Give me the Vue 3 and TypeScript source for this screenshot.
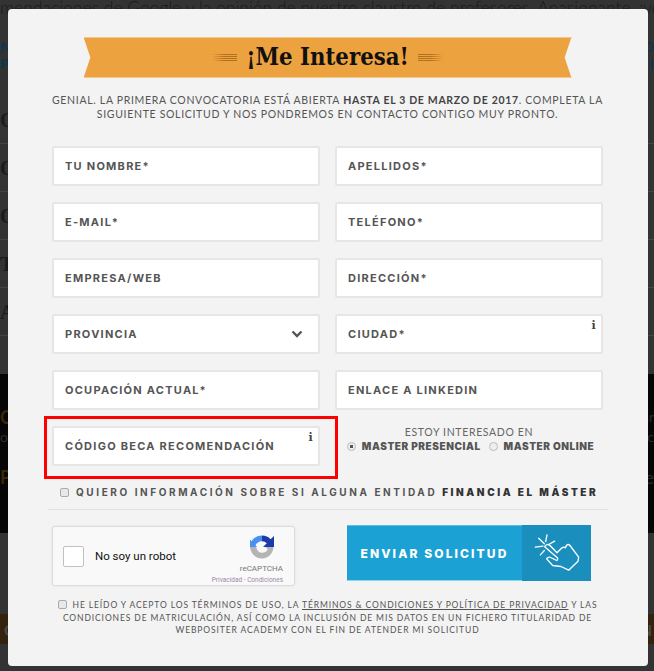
<script setup lang="ts">
interface Field { label: string; info?: boolean; select?: boolean }
const fields: Field[] = [
  { label: 'TU NOMBRE*' }, { label: 'APELLIDOS*' },
  { label: 'E-MAIL*' }, { label: 'TELÉFONO*' },
  { label: 'EMPRESA/WEB' }, { label: 'DIRECCIÓN*' },
  { label: 'PROVINCIA', select: true }, { label: 'CIUDAD*', info: true },
  { label: 'OCUPACIÓN ACTUAL*' }, { label: 'ENLACE A LINKEDIN' },
]
const bgRows: string[] = ['C', 'OI', 'O', 'T', 'A']
</script>

<template>
  <div class="page">
    <div class="backdrop">
      <p class="bg-line">mendaciones de Google y la opinión de nuestro claustro de profesores. Apasionante, ¡ven</p>
      <div class="bg-teal"><span>M</span><span>D</span></div>
      <div class="bg-teal"><span>P</span><span>I</span></div>
      <div class="bg-rows">
        <div v-for="r in bgRows" :key="r" class="bg-row">{{ r }}</div>
      </div>
      <div class="bg-band">
        <div class="bg-a"><span>C</span><span>ar</span></div>
        <div class="bg-b"><span>o a</span><span>c</span></div>
        <div class="bg-c"><span>PP</span><span>e</span></div>
      </div>
      <div class="bg-orange"><span>C</span><span>N</span></div>
    </div>
    <section class="modal">
      <div class="ribbon">
        <span class="rule left"></span>
        <h1>¡Me Interesa!</h1>
        <span class="rule"></span>
      </div>
      <p class="intro">
        GENIAL. LA PRIMERA CONVOCATORIA ESTÁ ABIERTA <b>HASTA EL 3 DE MARZO DE 2017</b>. COMPLETA LA<br />SIGUIENTE SOLICITUD Y NOS PONDREMOS EN CONTACTO CONTIGO MUY PRONTO.
      </p>
      <div class="grid">
        <div v-for="f in fields" :key="f.label" class="field">
          <span>{{ f.label }}</span>
          <i v-if="f.info" class="info">i</i>
          <svg v-if="f.select" class="chev" viewBox="0 0 12 8" width="12" height="8"><path d="M1.500 1.500 6 6l4.500-4.500" fill="none" stroke="#555" stroke-width="2.400" /></svg>
        </div>
        <div class="code-wrap">
          <div class="field">
            <span>CÓDIGO BECA RECOMENDACIÓN</span>
            <i class="info">i</i>
          </div>
        </div>
        <div class="interest">
          <div class="interest-title">ESTOY INTERESADO EN</div>
          <div class="radios">
            <span class="radio on"></span><b>MASTER PRESENCIAL</b>
            <span class="radio second"></span><b>MASTER ONLINE</b>
          </div>
        </div>
      </div>
      <div class="finance">
        <span class="check"></span>
        <span>QUIERO INFORMACIÓN SOBRE SI ALGUNA ENTIDAD <b>FINANCIA EL MÁSTER</b></span>
      </div>
      <div class="actions">
        <div class="captcha">
          <span class="captcha-box"></span>
          <span class="captcha-text">No soy un robot</span>
          <div class="captcha-logo">
            <svg viewBox="0 0 24 24" width="24" height="24">
              <path d="M12 .5C7.500.5 3.700 2.800 1.600 6.200L0 4.500V12h7l-1.500-1.700C6.300 8 8.900 6.300 12 6.300z" fill="#4a90f0" />
              <path d="M12 .5c3.500 0 6.500 1.300 8.600 3.700L24 1v11H13l3.800-3.700C15.500 7 13.900 6.300 12 6.300z" fill="#1c3aa9" />
              <path d="M0 12h6.300c.2 3.200 2.700 5.800 5.700 5.800 3 0 5-1.500 5.700-3.500l-2-2.300H23.500C23 18.500 18.500 23.500 12 23.500S.5 18.500 0 12z" fill="#b4b4b4" />
            </svg>
            <div class="re">reCAPTCHA</div>
            <div class="priv">Privacidad - Condiciones</div>
          </div>
        </div>
        <div class="submit">
          <div class="submit-label">ENVIAR SOLICITUD</div>
          <div class="submit-icon">
            <svg viewBox="575 50 150 125" width="50" height="42" fill="none" stroke="#fff" stroke-width="4" stroke-linejoin="round" stroke-linecap="round">
              <path d="M613 94c3-8 11-9 16-4l21 22 12-12c3-5 9-6 13-3l4-8c3-3 7-2 10 1l26 35-2 12-28 27-23-11-25-3-18-20c2-5 8-6 12-4l18 9c3-1 4-5 2-8z" />
              <path d="M595 68l17 17M620 58l-4 20M643 77l-18 10M585 95l23-3M600 118l12-13" />
            </svg>
          </div>
        </div>
      </div>
      <p class="legal">
        <span class="check small"></span>HE LEÍDO Y ACEPTO LOS TÉRMINOS DE USO, LA <u>TÉRMINOS &amp; CONDICIONES Y POLÍTICA DE PRIVACIDAD</u> Y LAS<br />CONDICIONES DE MATRICULACIÓN, ASÍ COMO LA INCLUSIÓN DE MIS DATOS EN UN FICHERO TITULARIDAD DE<br />WEBPOSITER ACADEMY CON EL FIN DE ATENDER MI SOLICITUD
      </p>
    </section>
  </div>
</template>

<style>
html, body { margin: 0; background: #333; }
</style>

<style scoped>
.page { position: relative; width: 654px; height: 671px; overflow: hidden; background: #333; }
.backdrop { position: absolute; inset: 0; }
.bg-line { margin: 0; height: 38px; font: 300 17.500px/16px Lato, sans-serif; color: #1a1a1a; white-space: nowrap; overflow: hidden; }
.bg-teal { display: flex; justify-content: space-between; height: 17px; font: 700 14px/17px Lato, sans-serif; color: #0a3a4c; }
.bg-rows { padding-top: 24px; }
.bg-row { box-sizing: border-box; height: 48px; padding-top: 12px; border-bottom: 1px solid #444; font: 700 20px/24px "Liberation Serif", serif; color: #1b1b1b; }
.bg-band { margin-top: 38px; height: 159px; padding-top: 33px; box-sizing: border-box; background: #060606; }
.bg-a, .bg-b, .bg-c { display: flex; justify-content: space-between; }
.bg-a { height: 20px; font: 700 18px/20px Lato, sans-serif; color: #3c2508; }
.bg-a span + span { color: #2b2b2b; font-weight: 400; font-size: 14px; }
.bg-b { height: 40px; font: 400 14px/20px Lato, sans-serif; color: #2b2b2b; }
.bg-c { font: 700 18px/20px Lato, sans-serif; color: #3c2508; }
.bg-c span + span { color: #2b2b2b; font-weight: 400; }
.bg-orange { display: flex; justify-content: space-between; align-items: center; margin-top: 81px; height: 30px; padding: 0 2px 0 4px; background: #33220e; font: 700 16px Lato, sans-serif; color: #4a4a4a; }
.modal {
  position: absolute; left: 8px; top: 9px; box-sizing: border-box; width: 640px; height: 657px;
  padding: 28px 45px 0 44px; background: #f3f3f3; border-radius: 4px;
}
.ribbon {
  position: relative; box-sizing: border-box; width: 488px; height: 41px; margin: 0 auto; display: flex; align-items: center; justify-content: center; gap: 9px;
  background: #eda240; border-top: 1px solid #f5c98a; border-bottom: 1px solid #f5c98a;
  clip-path: polygon(0 0, 100% 0, 98.600% 50%, 100% 100%, 0 100%, 1.400% 50%);
}
.ribbon h1 { margin: 0; font: 700 23.700px/39px "DejaVu Serif", serif; font-stretch: condensed; color: #111; white-space: nowrap; }
.rule { width: 25px; height: 7px; background: repeating-linear-gradient(rgba(150,90,20,.7) 0 1px, transparent 1px 2px); -webkit-mask-image: linear-gradient(to left, #000 50%, transparent); mask-image: linear-gradient(to left, #000 50%, transparent); }
.rule:last-child { -webkit-mask-image: linear-gradient(to right, #000 50%, transparent); mask-image: linear-gradient(to right, #000 50%, transparent); }
.intro { margin: 15px 0 0; text-align: center; white-space: nowrap; font: 400 10.500px/14px Lato, sans-serif; letter-spacing: .68px; color: #555; }
.intro b { font-weight: 700; color: #444; }
.grid { margin-top: 25px; display: grid; grid-template-columns: 268px 268px; column-gap: 15px; row-gap: 16px; }
.field {
  position: relative; box-sizing: border-box; height: 40px; padding-left: 11px; display: flex; align-items: center;
  background: #fff; border: 2px solid #e6e6e6; border-radius: 2px;
  font: 700 11px Inter, sans-serif; letter-spacing: 1.250px; color: #555; white-space: nowrap;
}
.info { position: absolute; right: 4px; top: 3px; font: 700 11px "DejaVu Serif", serif; color: #444; font-style: normal; }
.chev { position: absolute; right: 15px; top: 14px; }
.code-wrap { position: relative; }
.code-wrap::before { content: ""; position: absolute; box-sizing: border-box; inset: -10px -18px -13px -8px; border: 3px solid #f00; }
.interest { text-align: center; margin-top: -1px; }
.interest-title { font: 400 10.500px/14px Lato, sans-serif; letter-spacing: .65px; color: #666; }
.radios { display: flex; align-items: center; justify-content: center; padding-left: 3px; font: 700 10px/14px Inter, sans-serif; letter-spacing: .55px; color: #555; white-space: nowrap; }
.radio { box-sizing: border-box; width: 9px; height: 9px; margin-right: 6px; border: 1px solid #bbb; border-radius: 50%; background: #eee; }
.radio.on { background: radial-gradient(#555 0 1.500px, #eee 2px); }
.radio.second { margin-left: 8px; }
.finance { margin: 19px -5px 0 -4px; padding: 0 0 10px 12px; display: flex; align-items: center; gap: 7px; border-bottom: 1px solid #e2e2e2; font: 700 10px/14px Inter, sans-serif; letter-spacing: 2.580px; color: #555; white-space: nowrap; }
.finance b { color: #333; }
.check { display: inline-block; box-sizing: border-box; width: 9px; height: 9px; border: 1px solid #aaa; border-radius: 2px; background: #e8e8e8; }
.actions { margin-top: 15px; display: flex; justify-content: space-between; padding-right: 12px; }
.captcha { position: relative; box-sizing: border-box; width: 243px; height: 60px; margin-top: 1px; display: flex; align-items: center; background: #f9f9f9; border: 1px solid #dcdcdc; border-radius: 3px; box-shadow: 0 0 3px rgba(0,0,0,.08); font-family: Roboto, sans-serif; }
.captcha-box { box-sizing: border-box; width: 21px; height: 21px; margin-left: 10px; background: #fff; border: 1px solid #c1c1c1; border-radius: 2px; }
.captcha-text { margin-left: 11px; font-size: 11.500px; color: #111; }
.captcha-logo { position: absolute; right: 11px; top: 8px; display: flex; flex-direction: column; align-items: flex-end; }
.captcha-logo svg { display: block; margin-right: 9px; }
.re { margin-top: 5px; font-size: 8px; line-height: 10px; color: #777; }
.priv { margin-top: 2px; font-size: 6.500px; line-height: 9px; color: #98a; white-space: nowrap; }
.submit { width: 244px; height: 56px; display: flex; background: #1ba1d4; box-shadow: inset 0 1px #5cbfe2, inset 0 -1px #8fd3ec; color: #fff; }
.submit-label { flex: 1; display: flex; align-items: center; justify-content: center; font: 800 12px Inter, sans-serif; letter-spacing: 2.100px; white-space: nowrap; }
.submit-icon { width: 69px; display: flex; align-items: center; justify-content: center; background: #1a8fbd; }
.legal { margin: 13px 0 0; text-align: center; white-space: nowrap; font: 400 8.500px/12.500px Lato, sans-serif; letter-spacing: .89px; color: #555; }
.check.small { margin-right: 6px; vertical-align: -1px; }
</style>
